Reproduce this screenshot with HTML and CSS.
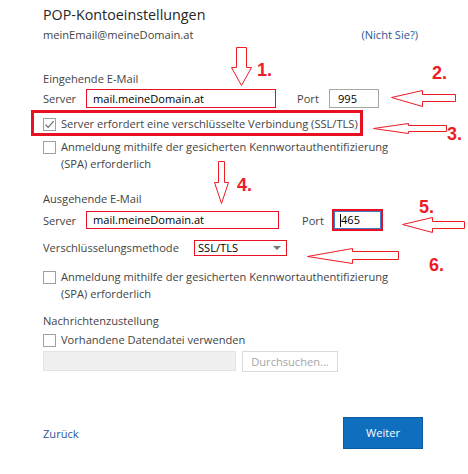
FILE: index.html
```html
<!DOCTYPE html>
<html lang="de">
<head>
<meta charset="utf-8">
<title>POP-Kontoeinstellungen</title>
<link rel="stylesheet" href="styles.css">
</head>
<body>
<div class="page">
  <h1 class="title">POP-Kontoeinstellungen</h1>
  <div class="email-row">
    <span>meinEmail@meineDomain.at</span>
    <a class="link" href="#">(Nicht Sie?)</a>
  </div>

  <div class="section-label first">Eingehende E-Mail</div>
  <div class="server-row">
    <span class="lbl-server">Server</span>
    <div class="input in-server red">mail.meineDomain.at</div>
    <span class="lbl-port">Port</span>
    <div class="input in-port">995</div>
  </div>
  <div class="check-row cr1">
    <span class="box checked"><svg width="11" height="11" viewBox="0 0 11 11"><path d="M1.5 5.8 L4.2 8.4 L9.6 2.2" fill="none" stroke="#6d6d6d" stroke-width="1.2"/></svg></span>
    <span class="ctext">Server erfordert eine verschlüsselte Verbindung (SSL/TLS)</span>
  </div>
  <div class="check-row cr2">
    <span class="box"></span>
    <span class="ctext">Anmeldung mithilfe der gesicherten Kennwortauthentifizierung<br>(SPA) erforderlich</span>
  </div>

  <div class="section-label second">Ausgehende E-Mail</div>
  <div class="server-row row2">
    <span class="lbl-server">Server</span>
    <div class="input in-server2 red">mail.meineDomain.at</div>
    <span class="lbl-port2">Port</span>
    <div class="input in-port2"><span class="caret"></span>465</div>
  </div>
  <div class="method-row">
    <span class="lbl-method">Verschlüsselungsmethode</span>
    <div class="select">SSL/TLS<span class="tri"></span></div>
  </div>
  <div class="check-row cr3">
    <span class="box"></span>
    <span class="ctext">Anmeldung mithilfe der gesicherten Kennwortauthentifizierung<br>(SPA) erforderlich</span>
  </div>

  <div class="section-label third">Nachrichtenzustellung</div>
  <div class="check-row cr4">
    <span class="box"></span>
    <span class="ctext">Vorhandene Datendatei verwenden</span>
  </div>
  <div class="file-row">
    <div class="disabled-input"></div>
    <div class="browse">Durchsuchen...</div>
  </div>

  <div class="footer">
    <a class="link back" href="#">Zurück</a>
    <div class="btn-next">Weiter</div>
  </div>

  <div class="hl-box"></div>
  <svg class="arrows" width="468" height="474" viewBox="0 0 468 474">
    <g fill="#fff" stroke="#ee1c25" stroke-width="1">
      <polygon points="236.5,47.5 246.5,47.5 246.5,67.5 251.5,67.5 241.5,85.5 231.5,67.5 236.5,67.5"/>
      <polygon points="391.5,97.5 422.5,90.5 422.5,94.5 455.5,94.5 455.5,101.5 422.5,101.5 422.5,106.5"/>
      <polygon points="373.5,128.5 408.5,123.5 408.5,125.5 446.5,125.5 446.5,131.5 408.5,131.5 408.5,133.5"/>
      <polygon points="218.5,161.5 224.5,161.5 224.5,182.5 228.5,182.5 221.5,203.5 214.5,182.5 218.5,182.5"/>
      <polygon points="402.5,224.5 432.5,217.5 432.5,221.5 464.5,221.5 464.5,228.5 432.5,228.5 432.5,232.5"/>
      <polygon points="307.5,256.5 352.5,248.5 352.5,251.5 398.5,251.5 398.5,259.5 352.5,259.5 352.5,263.5"/>
    </g>
  </svg>
  <span class="num n1">1.</span>
  <span class="num n2">2.</span>
  <span class="num n3">3.</span>
  <span class="num n4">4.</span>
  <span class="num n5">5.</span>
  <span class="num n6">6.</span>
</div>
</body>
</html>
```

FILE: styles.css
```css
* { box-sizing: border-box; }
html, body { margin: 0; padding: 0; background: #fff; }
body {
  font-family: "Open Sans", "Noto Sans", sans-serif;
  font-size: 11.1px;
  line-height: 17px;
  color: #444;
}
.page {
  position: relative;
  width: 468px;
  height: 474px;
  padding: 4px 0 0 43px;
  overflow: hidden;
}
.title {
  margin: 0;
  font-size: 14.3px;
  line-height: 22px;
  font-weight: 400;
  color: #262626;
}
.email-row {
  margin-top: 0;
  width: 375px;
  display: flex;
  justify-content: space-between;
}
.link { color: #2b5797; text-decoration: none; }

.section-label.first { margin-top: 27px; }
.section-label.second { margin-top: 18px; }
.section-label.third { margin-top: 10px; }

.server-row {
  margin-top: 2px;
  display: flex;
  align-items: center;
  height: 19px;
}
.server-row.row2 { height: 22px; }
.lbl-server { width: 43px; }
.input {
  height: 19px;
  border: 1px solid #a6a6a6;
  color: #000;
  padding: 0 6px;
  line-height: 17px;
  background: #fff;
}
.input.red { border-color: #e81123; }
.in-server { width: 190px; }
.lbl-port { margin-left: 21px; width: 32px; }
.in-port { width: 50px; padding-left: 8px; }
.in-server2 { width: 193px; height: 18px; line-height: 16px; }
.lbl-port2 { margin-left: 23px; width: 30px; }
.in-port2 {
  width: 51px;
  height: 22px;
  border: 2px solid #e81123;
  box-shadow: inset 0 0 0 1px #3d7fcf;
  padding-left: 6px;
  line-height: 18px;
  display: flex;
  align-items: center;
}
.caret {
  display: inline-block;
  width: 1px;
  height: 13px;
  background: #000;
}

.check-row { display: flex; align-items: flex-start; }
.check-row .box {
  width: 13px;
  height: 13px;
  border: 1px solid #a0a0a0;
  margin-top: 3px;
  margin-right: 5px;
  flex: none;
  display: flex;
  align-items: center;
  justify-content: center;
  background: #fff;
}
.cr1 { margin-top: 7px; }
.cr2 { margin-top: 6px; }
.cr3 { margin-top: 12px; }
.cr4 { margin-top: 2px; }

.method-row {
  margin-top: 8px;
  display: flex;
  align-items: center;
  height: 17px;
}
.lbl-method { width: 151px; }
.select {
  position: relative;
  width: 93px;
  height: 16px;
  border: 1px solid #e81123;
  color: #000;
  line-height: 14px;
  padding-left: 3px;
}
.tri {
  position: absolute;
  right: 5px;
  top: 5px;
  width: 0;
  height: 0;
  border-left: 4px solid transparent;
  border-right: 4px solid transparent;
  border-top: 4px solid #777;
}

.file-row {
  margin-top: 3px;
  display: flex;
  gap: 6px;
  height: 21px;
}
.disabled-input {
  width: 193px;
  height: 20px;
  background: #f0f0f0;
  border: 1px solid #e3e3e3;
}
.browse {
  width: 96px;
  height: 21px;
  border: 1px solid #dadada;
  color: #a6a6a6;
  text-align: center;
  line-height: 19px;
  background: #fff;
}

.footer {
  margin-top: 45px;
  width: 380px;
  height: 32px;
  display: flex;
  align-items: center;
  justify-content: space-between;
}
.btn-next {
  width: 80px;
  height: 32px;
  background: #106ebe;
  border: 1px solid #0b5aa2;
  color: #fff;
  text-align: center;
  line-height: 30px;
}

.hl-box {
  position: absolute;
  left: 31px;
  top: 110px;
  width: 332px;
  height: 26px;
  border: 3px solid #e81123;
}
.arrows {
  position: absolute;
  left: 0;
  top: 0;
  pointer-events: none;
}
.num {
  position: absolute;
  font-family: "Liberation Sans", Arial, sans-serif;
  font-weight: 700;
  font-size: 18px;
  line-height: 18px;
  color: #ee1c25;
}
.n1 { left: 257px; top: 61px; }
.n2 { left: 432px; top: 64px; }
.n3 { left: 447px; top: 125px; }
.n4 { left: 237px; top: 176px; }
.n5 { left: 419px; top: 198px; }
.n6 { left: 429px; top: 256px; }
```
